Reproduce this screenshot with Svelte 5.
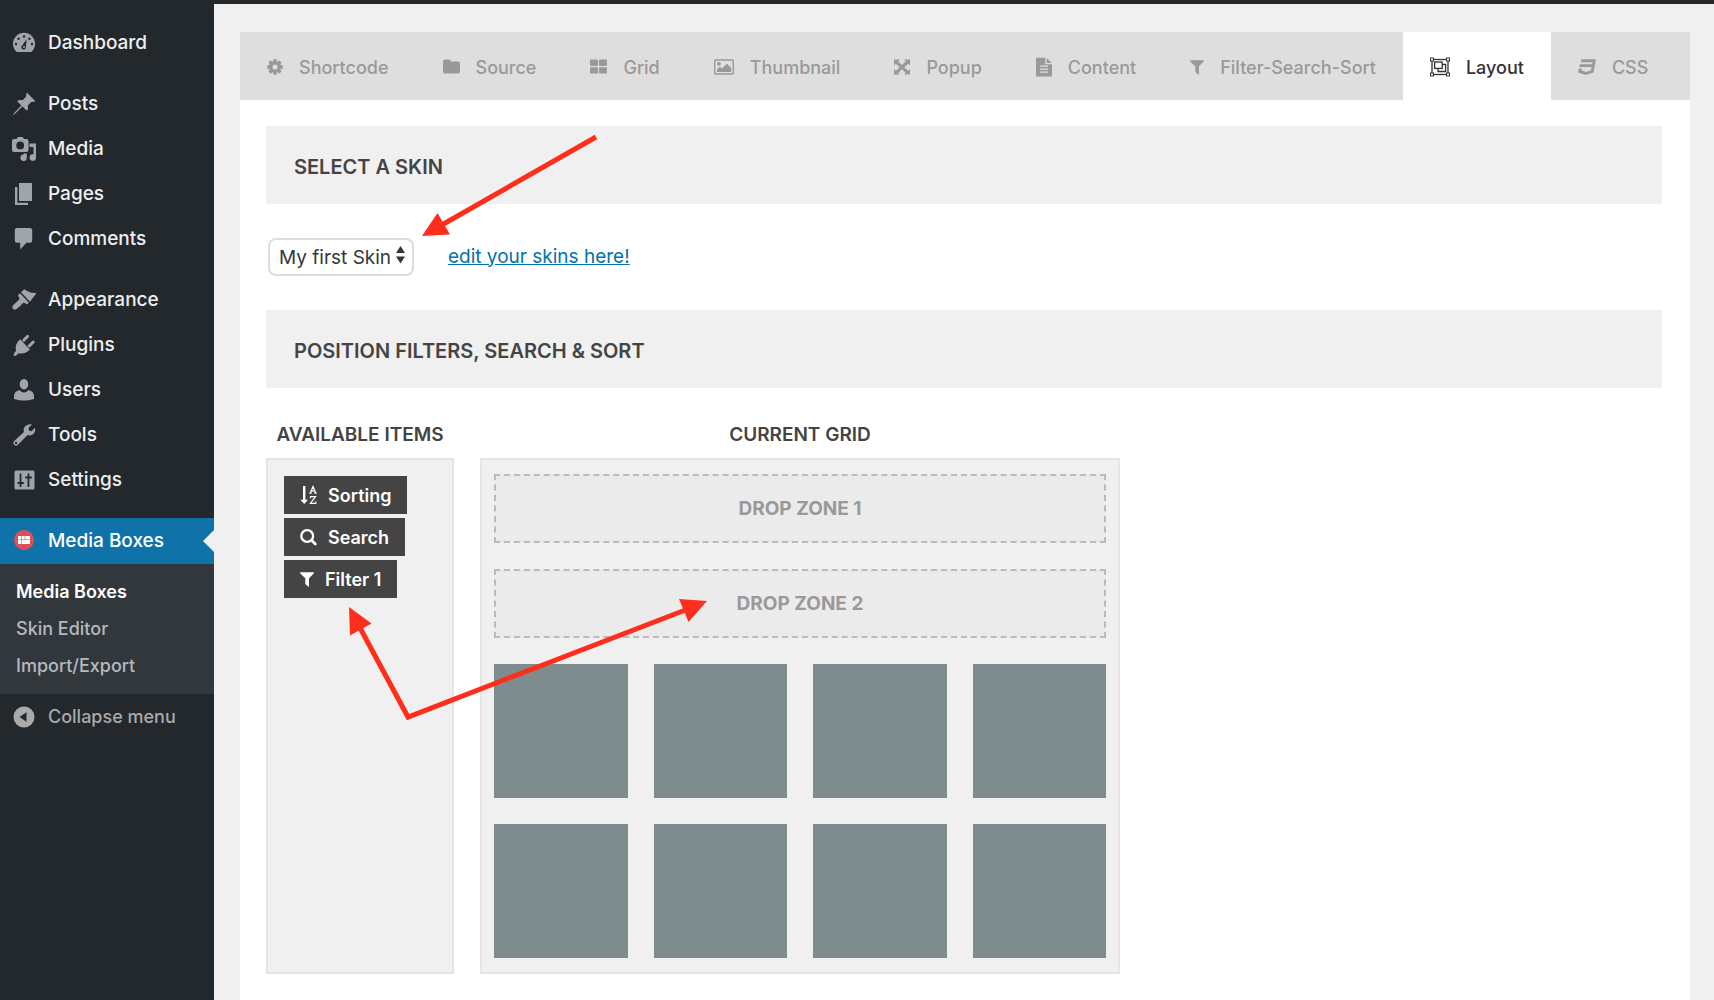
<script>
  const menuGroups = [
    [{ icon: 'dashboard', label: 'Dashboard' }],
    [
      { icon: 'pin', label: 'Posts' },
      { icon: 'media', label: 'Media' },
      { icon: 'pages', label: 'Pages' },
      { icon: 'comment', label: 'Comments' },
    ],
    [
      { icon: 'brush', label: 'Appearance' },
      { icon: 'plug', label: 'Plugins' },
      { icon: 'user', label: 'Users' },
      { icon: 'wrench', label: 'Tools' },
      { icon: 'sliders', label: 'Settings' },
    ],
  ];

  const submenu = ['Media Boxes', 'Skin Editor', 'Import/Export'];

  const tabs = [
    { icon: 'gear', label: 'Shortcode', w: 16 },
    { icon: 'folder', label: 'Source', w: 17 },
    { icon: 'grid', label: 'Grid', w: 17 },
    { icon: 'image', label: 'Thumbnail', w: 20 },
    { icon: 'expand', label: 'Popup', w: 16 },
    { icon: 'file', label: 'Content', w: 16 },
    { icon: 'funnel', label: 'Filter-Search-Sort', w: 14 },
    { icon: 'group', label: 'Layout', w: 20 },
    { icon: 'css', label: 'CSS', w: 18 },
  ];

  const items = [
    { icon: 'sort', label: 'Sorting', w: 17 },
    { icon: 'search', label: 'Search', w: 17 },
    { icon: 'funnel', label: 'Filter 1', w: 14 },
  ];

  const dropZones = ['Drop Zone 1', 'Drop Zone 2'];
  const cells = Array.from({ length: 8 }, (_, i) => i);

  let activeTab = $state('Layout');
  let skin = $state('My first Skin');
</script>

{#snippet menuIcon(name)}
  <svg class="menu-icon" viewBox="0 0 24 24" aria-hidden="true">
    {#if name === 'dashboard'}
      <path fill="currentColor" d="M4.200 21.500A11 11 0 1 1 19.800 21.500Q19.300 22 18.500 22H5.500Q4.700 22 4.200 21.500Z" transform="translate(0 -1)" />
      <g fill="#23282d">
        <circle cx="12" cy="5.500" r="1.200" /><circle cx="6.600" cy="7.800" r="1.200" /><circle cx="17.400" cy="7.800" r="1.200" />
        <circle cx="4" cy="13" r="1.200" /><circle cx="20" cy="13" r="1.200" />
        <path d="M14.600 8.200L13.900 15.800A2.300 2.300 0 1 1 10.400 14.300Z" />
      </g>
      <circle cx="12" cy="16" r="1" fill="currentColor" />
    {:else if name === 'pin'}
      <path fill="currentColor" d="M14.800 0.500L23.500 9.200L21.800 9.800Q19.800 9.400 19 10.200L15.800 13.400Q16.700 17 14.800 18.800L10.500 14.600L3 21.800L0.800 23.200L2.200 21L9.400 13.500L5.100 9.200Q7 7.300 10.600 8.200L13.800 5Q14.600 4.200 14.200 2.200Z" />
    {:else if name === 'media'}
      <path fill="currentColor" fill-rule="evenodd" d="M4.500 2L6 0H10.500L12 2H14.500Q16.500 2 16.500 4V13Q16.500 15 14.500 15H2Q0 15 0 13V4Q0 2 2 2ZM8.200 4.500A3.900 3.900 0 1 0 8.200 12.300A3.900 3.900 0 1 0 8.200 4.500Z" />
      <path fill="currentColor" d="M17.500 6.500H24V20.500A3.200 3.200 0 1 1 21.500 17.500V10H17.500ZM14.800 16.500V21A3.200 3.200 0 1 1 11.800 17.500V16.500Z" />
    {:else if name === 'pages'}
      <path fill="currentColor" d="M7 1H20V19H7ZM3 5H5.400V20.800H16V23H3Z" />
    {:else if name === 'comment'}
      <path fill="currentColor" d="M5 1H18Q20.200 1 20.200 3.200V13.500Q20.200 15.700 18 15.700H14.500L8.200 22.500V15.700H5Q2.800 15.700 2.800 13.500V3.200Q2.800 1 5 1Z" />
    {:else if name === 'brush'}
      <path fill="currentColor" d="M9 4.200L12.200 1.200Q15 3 18.500 4.500Q22 5.200 24.800 4.600L18 13.800ZM8 5.300L17 14.800L14.500 16.500Q12.300 13.800 10.500 15.500Q9 17.500 5.200 20.500Q2.500 22.600 0.800 20.800Q-0.600 19 1.800 16.500Q5 13.500 6.800 12Q8.500 10.500 5.800 7.500Z" />
    {:else if name === 'plug'}
      <path fill="currentColor" d="M8.200 6.200L17.800 16.500Q13.500 21.500 6.500 20.200L4.200 22.600Q2.800 23.500 1.900 22.600Q1 21.500 2.200 20L4 18Q2.500 11 8.200 6.200Z" />
      <path stroke="currentColor" stroke-width="3" stroke-linecap="round" d="M11.800 7.200L15.500 3.400M17.200 13L21.200 9" />
    {:else if name === 'user'}
      <path fill="currentColor" d="M12 1A4.300 5.200 0 1 1 11.900 1ZM7.500 12Q9.500 14.500 12 14.500Q14.500 14.500 16.500 12Q22 13.500 22 18V21Q17 22.600 12 22.600Q7 22.600 2 21V18Q2 13.500 7.500 12Z" />
    {:else if name === 'wrench'}
      <path fill="currentColor" fill-rule="evenodd" d="M20 1.500L16.500 5L17 7.500L19.500 8.200L23 4.800Q23.800 8.500 21.500 10.800Q19 13.200 15.600 12L6 21.800Q4 23.500 2.200 21.800Q0.300 19.800 2.200 18L12 9Q10.800 5.500 13.500 2.900Q16.300 0.400 20 1.500ZM4 18.800A1.200 1.200 0 1 0 4.100 21.200A1.200 1.200 0 1 0 4 18.800Z" />
    {:else if name === 'sliders'}
      <rect x="2.500" y="2.500" width="20" height="19" rx="1.500" fill="currentColor" />
      <path stroke="#23282d" stroke-width="1.800" d="M8.500 5.500V19M5.500 15H11.800M16.500 5.500V19M13.300 9.500H19.800" />
    {:else if name === 'boxes'}
      <circle cx="12" cy="12" r="10" fill="#e14d56" />
      <path fill="#fff" d="M6 8H9V11.500H6ZM9.600 8H12.800V11.500H9.600ZM13.400 8H18V11.500H13.400ZM6 12.100H9V16H6ZM9.600 12.100H18V16H9.600Z" />
    {:else if name === 'collapse'}
      <circle cx="12" cy="12" r="10.500" fill="currentColor" />
      <path fill="#23282d" d="M14.500 7.200V16.800L7.500 12Z" />
    {/if}
  </svg>
{/snippet}

{#snippet icon(name, w)}
  <svg class="icon" width={w} height="20" viewBox="0 0 {w} 20" aria-hidden="true">
    {#if name === 'gear'}
      <circle cx="8" cy="10" r="4.300" fill="none" stroke="currentColor" stroke-width="3.600" />
      <path stroke="currentColor" stroke-width="3.400" d="M8 2.200V5M8 15V17.800M0.200 10H3M13 10H15.800M2.500 4.500L4.400 6.400M11.600 13.600L13.500 15.500M13.500 4.500L11.600 6.400M4.400 13.600L2.500 15.500" />
    {:else if name === 'folder'}
      <path fill="currentColor" d="M2 2.500H6Q7.800 2.500 7.800 4.500H15Q17 4.500 17 6.500V14.500Q17 16.500 15 16.500H2Q0 16.500 0 14.500V4.500Q0 2.500 2 2.500Z" />
    {:else if name === 'grid'}
      <g fill="currentColor">
        <rect y="2.500" width="8" height="6.400" rx="1.200" /><rect x="9" y="2.500" width="8" height="6.400" rx="1.200" />
        <rect y="10.200" width="8" height="6.400" rx="1.200" /><rect x="9" y="10.200" width="8" height="6.400" rx="1.200" />
      </g>
    {:else if name === 'image'}
      <rect x="0.700" y="3" width="18.600" height="14" rx="1" fill="none" stroke="currentColor" stroke-width="1.400" />
      <circle cx="5" cy="6.800" r="1.900" fill="currentColor" />
      <path fill="currentColor" d="M3 15V12.500L6 9.800L7.700 11.500L13 6.800L17.200 11V15Z" />
    {:else if name === 'expand'}
      <path fill="currentColor" d="M0 2.500H6L4.200 4.300L8 8.100L11.800 4.300L10 2.500H16V8.500L14.200 6.700L10.400 10.200L14.200 13.800L16 12V17.500H10L11.800 15.900L8 12.200L4.200 15.900L6 17.500H0V12L1.800 13.800L5.600 10.200L1.800 6.700L0 8.500Z" />
    {:else if name === 'file'}
      <path fill="currentColor" fill-rule="evenodd" d="M1 0.800H9.300V7.200H16V18.500Q16 19.500 15 19.500H1Q0 19.500 0 18.500V1.800Q0 0.800 1 0.800ZM10.600 1L15.600 6H10.600ZM4 8.500V9.700H12V8.500ZM4 11.500V12.700H12V11.500ZM4 14.500V15.700H12V14.500Z" />
    {:else if name === 'funnel'}
      <path fill="currentColor" d="M0.500 3.300H13.500Q14.300 3.600 13.700 4.500L9 9.300V17Q8.800 18 8 17.500L5.300 15V9.300L0.300 4.500Q-0.200 3.600 0.500 3.300Z" />
    {:else if name === 'group'}
      <g fill="none" stroke="currentColor" stroke-width="1.300">
        <rect x="2" y="2.500" width="16" height="15" />
        <rect x="4.600" y="5" width="7.600" height="6.400" />
        <path d="M12.200 7.500H15.600V14.500H8V11.500" />
      </g>
      <g fill="#fff" stroke="currentColor">
        <rect x="0.500" y="1" width="3" height="3" /><rect x="16.500" y="1" width="3" height="3" />
        <rect x="0.500" y="16" width="3" height="3" /><rect x="16.500" y="16" width="3" height="3" />
      </g>
    {:else if name === 'css'}
      <path fill="currentColor" d="M3.400 2.200H18L15.500 15.400L7.600 18L0 15.400L0.700 11.600H3.900L3.600 13.300L8.100 15L12.900 13.300L13.600 10.100H1.200L1.800 7.300H14.100L14.500 5.200H2.800Z" />
    {:else if name === 'sort'}
      <path fill="currentColor" d="M3 1H5.400V14.800H8L4.200 19L0.400 14.800H3Z" />
      <path fill="none" stroke="currentColor" stroke-width="1.200" d="M10.300 8L13 1.500L15.700 8M11.300 5.800H14.700M9.300 8.200H11.700M14.300 8.200H16.700M10.500 13.200V11.600H15.500L10.400 18.400H15.800V16.600" />
    {:else if name === 'search'}
      <circle cx="7.200" cy="9" r="5.900" fill="none" stroke="currentColor" stroke-width="2.300" />
      <path stroke="currentColor" stroke-width="2.800" stroke-linecap="round" d="M11.800 13.600L15.300 17.100" />
    {/if}
  </svg>
{/snippet}

<div class="topbar"></div>
<div class="page">
  <nav class="sidebar" aria-label="Main menu">
    {#each menuGroups as group}
      <ul class="menu">
        {#each group as entry}
          <li><a class="menu-link" href="#{entry.icon}">{@render menuIcon(entry.icon)}{entry.label}</a></li>
        {/each}
      </ul>
    {/each}
    <a class="menu-link current" href="#boxes">{@render menuIcon('boxes')}Media Boxes</a>
    <ul class="submenu">
      {#each submenu as label, i}
        <li><a class:selected={i === 0} href="#sub-{i}">{label}</a></li>
      {/each}
    </ul>
    <button class="menu-link collapse" type="button">{@render menuIcon('collapse')}Collapse menu</button>
  </nav>

  <main class="content">
    <div class="panel">
      <div class="tabs" role="tablist">
        {#each tabs as tab}
          <button
            class="tab"
            class:active={activeTab === tab.label}
            type="button"
            role="tab"
            aria-selected={activeTab === tab.label}
            onclick={() => (activeTab = tab.label)}
          >{@render icon(tab.icon, tab.w)}{tab.label}</button>
        {/each}
      </div>

      <div class="body">
        <h2 class="section-title">SELECT A SKIN</h2>
        <div class="skin-row">
          <div class="select-wrap">
            <select aria-label="Skin" bind:value={skin}>
              <option>My first Skin</option>
            </select>
            <svg class="updown" viewBox="0 0 9 18" aria-hidden="true"><path fill="#32373c" d="M4.500 0L9 7H0ZM0 10.500H9L4.500 17.500Z" /></svg>
          </div>
          <a class="edit-link" href="#skins">edit your skins here!</a>
        </div>

        <h2 class="section-title">POSITION FILTERS, SEARCH &amp; SORT</h2>
        <div class="columns">
          <section class="available">
            <h3>AVAILABLE ITEMS</h3>
            <div class="box item-list">
              {#each items as item}
                <button class="item" type="button">{@render icon(item.icon, item.w)}{item.label}</button>
              {/each}
            </div>
          </section>
          <section class="current-grid">
            <h3>CURRENT GRID</h3>
            <div class="box layout-box">
              {#each dropZones as zone}
                <div class="zone">{zone}</div>
              {/each}
              <div class="cells">
                {#each cells as cell (cell)}
                  <div class="cell"></div>
                {/each}
              </div>
            </div>
          </section>
        </div>
      </div>
    </div>
  </main>

  <svg class="arrows" width="720" height="730" viewBox="0 0 720 730" aria-hidden="true">
    <g fill="none" stroke="#ff2d1c" stroke-width="5">
      <path d="M596 137L440 226" />
      <path d="M359 626L408 717L688 609" />
    </g>
    <path fill="#ff2d1c" d="M422 236L437.500 213L450 234.500ZM349 607L371.500 623.500L350 635.500ZM707 601L679 599L688.500 622Z" />
  </svg>
</div>

<style>
  :global(body) {
    background: #f0f0f0;
    font-family: Inter, 'Liberation Sans', sans-serif;
    font-size: 18px;
    color: #444;
  }

  * {
    box-sizing: border-box;
  }

  ul {
    list-style: none;
    margin: 0;
    padding: 0;
  }

  button {
    border: 0;
    font: inherit;
    cursor: pointer;
  }

  a {
    text-decoration: none;
  }

  .topbar {
    height: 4px;
    background: #23282d;
  }

  .page {
    display: flex;
    min-height: calc(100vh - 4px);
  }

  .sidebar {
    flex: 0 0 214px;
    padding-top: 16px;
    background: #23282d;
  }

  .menu {
    margin-bottom: 16px;
  }

  .menu-link {
    display: flex;
    align-items: center;
    gap: 12px;
    width: 100%;
    height: 45px;
    padding: 0 12px;
    color: #eee;
    font-size: 19px;
    font-weight: 500;
  }

  .menu-icon {
    flex: none;
    width: 24px;
    height: 24px;
    color: #a0a5aa;
  }

  .menu-link.current {
    position: relative;
    height: 46px;
    padding-bottom: 2px;
    background: #0f73aa;
    color: #fff;
  }

  .current::after {
    content: '';
    position: absolute;
    top: 12px;
    right: 0;
    border: 11px solid transparent;
    border-left-width: 0;
    border-right-color: #f0f0f0;
  }

  .submenu {
    padding: 9px 0 10px;
    background: #32373c;
  }

  .submenu a {
    display: block;
    padding: 0 16px;
    color: #b4b9be;
    font-weight: 500;
    line-height: 37px;
  }

  .submenu a.selected {
    color: #fff;
    font-weight: 600;
  }

  .menu-link.collapse {
    background: none;
    color: #aaa;
    font-size: 18px;
  }

  .collapse .menu-icon {
    color: #aaa;
  }

  .content {
    flex: 1;
    min-width: 0;
    padding: 28px 24px 0 26px;
  }

  .panel {
    min-height: 100%;
    background: #fff;
  }

  .tabs {
    display: flex;
    background: #dedede;
  }

  .tab {
    display: flex;
    align-items: center;
    gap: 16px;
    height: 68px;
    padding: 2px 27px 0;
    background: none;
    color: #999;
    font-weight: 500;
    white-space: nowrap;
  }

  .tab.active {
    background: #fff;
    color: #333;
  }

  .icon {
    flex: none;
  }

  .body {
    padding: 26px 28px 26px 26px;
  }

  .section-title {
    margin: 0;
    padding: 28px 28px 24px;
    background: #f0f0f0;
    color: #444;
    font-size: 20px;
    font-weight: 600;
    line-height: 26px;
  }

  .skin-row {
    display: flex;
    align-items: center;
    gap: 34px;
    padding: 34px 2px;
  }

  .select-wrap {
    position: relative;
    width: 146px;
  }

  select {
    display: block;
    appearance: none;
    width: 100%;
    height: 38px;
    padding: 0 16px 0 9px;
    border: 2px solid #ddd;
    border-radius: 8px;
    background: #fff;
    color: #32373c;
    font: inherit;
    font-size: 19px;
  }

  .updown {
    position: absolute;
    top: 8px;
    right: 9px;
    width: 9px;
    height: 18px;
    pointer-events: none;
  }

  .edit-link {
    padding-bottom: 2px;
    color: #0073aa;
    font-size: 19px;
    text-decoration: underline;
  }

  .columns {
    display: flex;
    gap: 26px;
    padding-top: 32px;
  }

  .available {
    display: flex;
    flex-direction: column;
    flex: 0 0 188px;
  }

  .current-grid {
    flex: 0 1 640px;
  }

  h3 {
    margin: 0;
    padding: 1px 0 9px;
    color: #444;
    font-size: 19px;
    font-weight: 600;
    line-height: 28px;
    text-align: center;
  }

  .box {
    border: 2px solid #e5e5e5;
    background: #f0f0f0;
  }

  .item-list {
    display: flex;
    flex: 1;
    flex-direction: column;
    align-items: flex-start;
    gap: 4px;
    padding: 16px;
  }

  .item {
    display: flex;
    align-items: center;
    gap: 11px;
    height: 38px;
    padding: 0 16px;
    background: #444;
    color: #fff;
    font-weight: 600;
  }

  .layout-box {
    display: flex;
    flex-direction: column;
    gap: 26px;
    padding: 14px 12px;
  }

  .zone {
    display: flex;
    align-items: center;
    justify-content: center;
    height: 69px;
    border: 2px dashed #bbb;
    background: #ebebeb;
    color: #999;
    font-size: 19px;
    font-weight: 700;
    text-transform: uppercase;
  }

  .cells {
    display: grid;
    grid-template-columns: repeat(4, 1fr);
    gap: 26px;
  }

  .cell {
    height: 134px;
    background: #7f8c8d;
  }

  .arrows {
    position: absolute;
    top: 0;
    left: 0;
    pointer-events: none;
  }
</style>
